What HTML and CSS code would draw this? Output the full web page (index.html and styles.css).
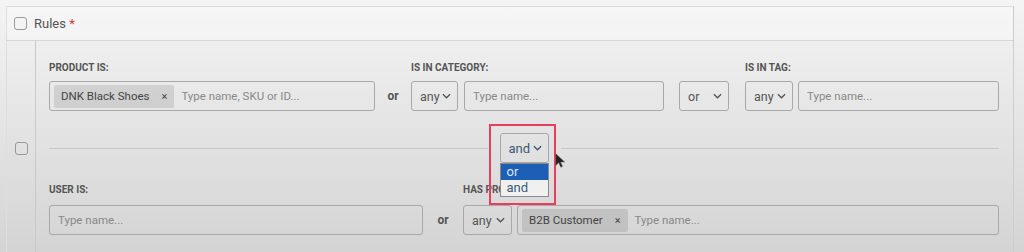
FILE: index.html
```html
<!DOCTYPE html>
<html lang="en">
<head>
    <meta charset="UTF-8">
    <meta name="viewport" content="width=device-width, initial-scale=1.0">
    <title>Rules</title>
    <link rel="stylesheet" href="styles.css">
</head>
<body>
    <div class="rules">
        <div class="rules-head">
            <span class="check"></span>
            <span class="title">Rules <span class="req">*</span></span>
        </div>
        <div class="rules-body">
            <div class="side"><span class="check"></span></div>
            <div class="content">
                <div class="row">
                    <div class="field w-product">
                        <div class="label">PRODUCT IS:</div>
                        <div class="input">
                            <span class="chip">DNK Black Shoes <span class="x">×</span></span>
                            <span class="ph">Type name, SKU or ID...</span>
                        </div>
                    </div>
                    <div class="or-word w-or1">or</div>
                    <div class="field">
                        <div class="label">IS IN CATEGORY:</div>
                        <div class="pair">
                            <div class="select w-any">any <svg viewBox="0 0 10 6"><path d="M1 1l4 4 4-4"/></svg></div>
                            <div class="input w-cat"><span class="ph">Type name...</span></div>
                        </div>
                    </div>
                    <div class="select w-orsel">or <svg viewBox="0 0 10 6"><path d="M1 1l4 4 4-4"/></svg></div>
                    <div class="field">
                        <div class="label">IS IN TAG:</div>
                        <div class="pair tight">
                            <div class="select w-any2">any <svg viewBox="0 0 10 6"><path d="M1 1l4 4 4-4"/></svg></div>
                            <div class="input w-tag"><span class="ph">Type name...</span></div>
                        </div>
                    </div>
                </div>

                <div class="joiner">
                    <div class="line"></div>
                    <div class="join-wrap">
                        <div class="select join">and <svg viewBox="0 0 10 6"><path d="M1 1l4 4 4-4"/></svg></div>
                        <div class="options">
                            <div class="opt active">or</div>
                            <div class="opt">and</div>
                        </div>
                        <div class="highlight"></div>
                        <svg class="cursor" viewBox="0 0 12 18"><path d="M1 1v14l3.5-3.5 2.5 5.5 2-1-2.5-5.2h5z"/></svg>
                    </div>
                    <div class="line"></div>
                </div>

                <div class="row row2">
                    <div class="field">
                        <div class="label">USER IS:</div>
                        <div class="input w-user"><span class="ph">Type name...</span></div>
                    </div>
                    <div class="or-word w-or2">or</div>
                    <div class="field">
                        <div class="label">HAS PROFILE:</div>
                        <div class="pair tight">
                            <div class="select w-any3">any <svg viewBox="0 0 10 6"><path d="M1 1l4 4 4-4"/></svg></div>
                            <div class="input w-role">
                                <span class="chip">B2B Customer <span class="x">×</span></span>
                                <span class="ph">Type name...</span>
                            </div>
                        </div>
                    </div>
                </div>
            </div>
        </div>
    </div>
</body>
</html>
```

FILE: styles.css
```css
body {
    margin: 0;
    height: 252px;
    overflow: hidden;
    font-family: Roboto, "Liberation Sans", sans-serif;
    color: #555;
    background: linear-gradient(#f4f4f4, #d4d4d4);
}
.rules {
    margin: 6px 0 0 6px;
    width: 1006px;
    border: 1px solid #dedede;
    border-right-color: #cdcdcd;
}
.rules-head {
    height: 33px;
    display: flex;
    align-items: center;
    gap: 7px;
    padding-left: 7px;
    border-bottom: 1px solid #d6d6d6;
    background: rgba(255, 255, 255, 0.25);
}
.title {
    font-size: 13px;
    color: #555;
}
.req {
    color: #d23a3a;
}
.check {
    width: 11px;
    height: 11px;
    border: 1.5px solid #999;
    border-radius: 3px;
    display: inline-block;
}
.rules-body {
    display: flex;
}
.side {
    width: 28px;
    flex-shrink: 0;
    border-right: 1px solid #c9c9c9;
    display: flex;
    align-items: center;
    justify-content: center;
}
.content {
    flex: 1;
    min-width: 0;
    padding: 20px 14px 20px 13px;
}
.row {
    display: flex;
    align-items: flex-end;
}
.row > * {
    flex-shrink: 0;
}
.label {
    font-size: 10px;
    font-weight: bold;
    line-height: 14px;
    margin-bottom: 6px;
    color: #555;
}
.pair {
    display: flex;
    gap: 6px;
}
.pair.tight {
    gap: 5px;
}
.input {
    height: 28px;
    border: 1px solid #a8a8a8;
    border-radius: 3px;
    display: flex;
    align-items: center;
    padding: 0 4px;
    font-size: 11.5px;
    box-sizing: content-box;
}
.ph {
    color: #888;
    padding-left: 4px;
    white-space: nowrap;
}
.chip {
    height: 23px;
    display: flex;
    align-items: center;
    padding: 0 7px;
    margin-right: 3px;
    background: rgba(0, 0, 0, 0.1);
    border-radius: 2px;
    color: #444;
    white-space: nowrap;
}
.chip .x {
    margin-left: 12px;
    font-size: 11px;
}
.select {
    height: 28px;
    border: 1px solid #a8a8a8;
    border-radius: 3px;
    display: flex;
    align-items: center;
    justify-content: space-between;
    padding: 0 6px 0 8px;
    font-size: 12.5px;
    color: #555;
    box-sizing: content-box;
}
.select svg {
    width: 9px;
    height: 6px;
    fill: none;
    stroke: #555;
    stroke-width: 1.5;
}
.or-word {
    height: 30px;
    line-height: 30px;
    text-align: center;
    font-size: 12px;
    font-weight: bold;
    color: #555;
}
.w-product .input { width: 316px; }
.w-or1 { width: 36px; }
.w-any { width: 31px; }
.w-cat { width: 190px; }
.w-orsel { width: 34px; margin: 0 16px 0 15px; }
.w-any2 { width: 32px; }
.w-tag { width: 191px; }
.w-user { width: 364px; }
.w-or2 { width: 40px; }
.w-any3 { width: 33px; }
.w-role { width: 472px; }

.joiner {
    display: flex;
    align-items: center;
    gap: 12px;
    margin-top: 22px;
    height: 30px;
}
.line {
    flex: 1;
    height: 1px;
    background: #c6c6c6;
}
.join-wrap {
    position: relative;
}
.select.join {
    width: 33px;
    height: 28px;
    font-size: 13px;
    color: #3d5a78;
}
.select.join svg {
    stroke: #3d5a78;
}
.options {
    position: absolute;
    top: 30px;
    left: 0;
    width: 47px;
    border: 1px solid #8a8a8a;
    background: #f0f0f0;
    z-index: 2;
    font-size: 13px;
}
.opt {
    height: 16px;
    line-height: 16px;
    padding-left: 6px;
    color: #3d5a78;
}
.opt.active {
    background: #1d5fb6;
    color: #dbe6f5;
}
.highlight {
    position: absolute;
    left: -11px;
    top: -9px;
    width: 63px;
    height: 77px;
    border: 2px solid #e83e5e;
    z-index: 3;
}
.cursor {
    position: absolute;
    left: 55px;
    top: 20px;
    width: 10px;
    height: 15px;
    fill: #222;
    stroke: #555;
    stroke-width: 0.6;
    z-index: 4;
}
.row2 {
    margin-top: 20px;
}
.row2 .label {
    margin-bottom: 8px;
}
```
